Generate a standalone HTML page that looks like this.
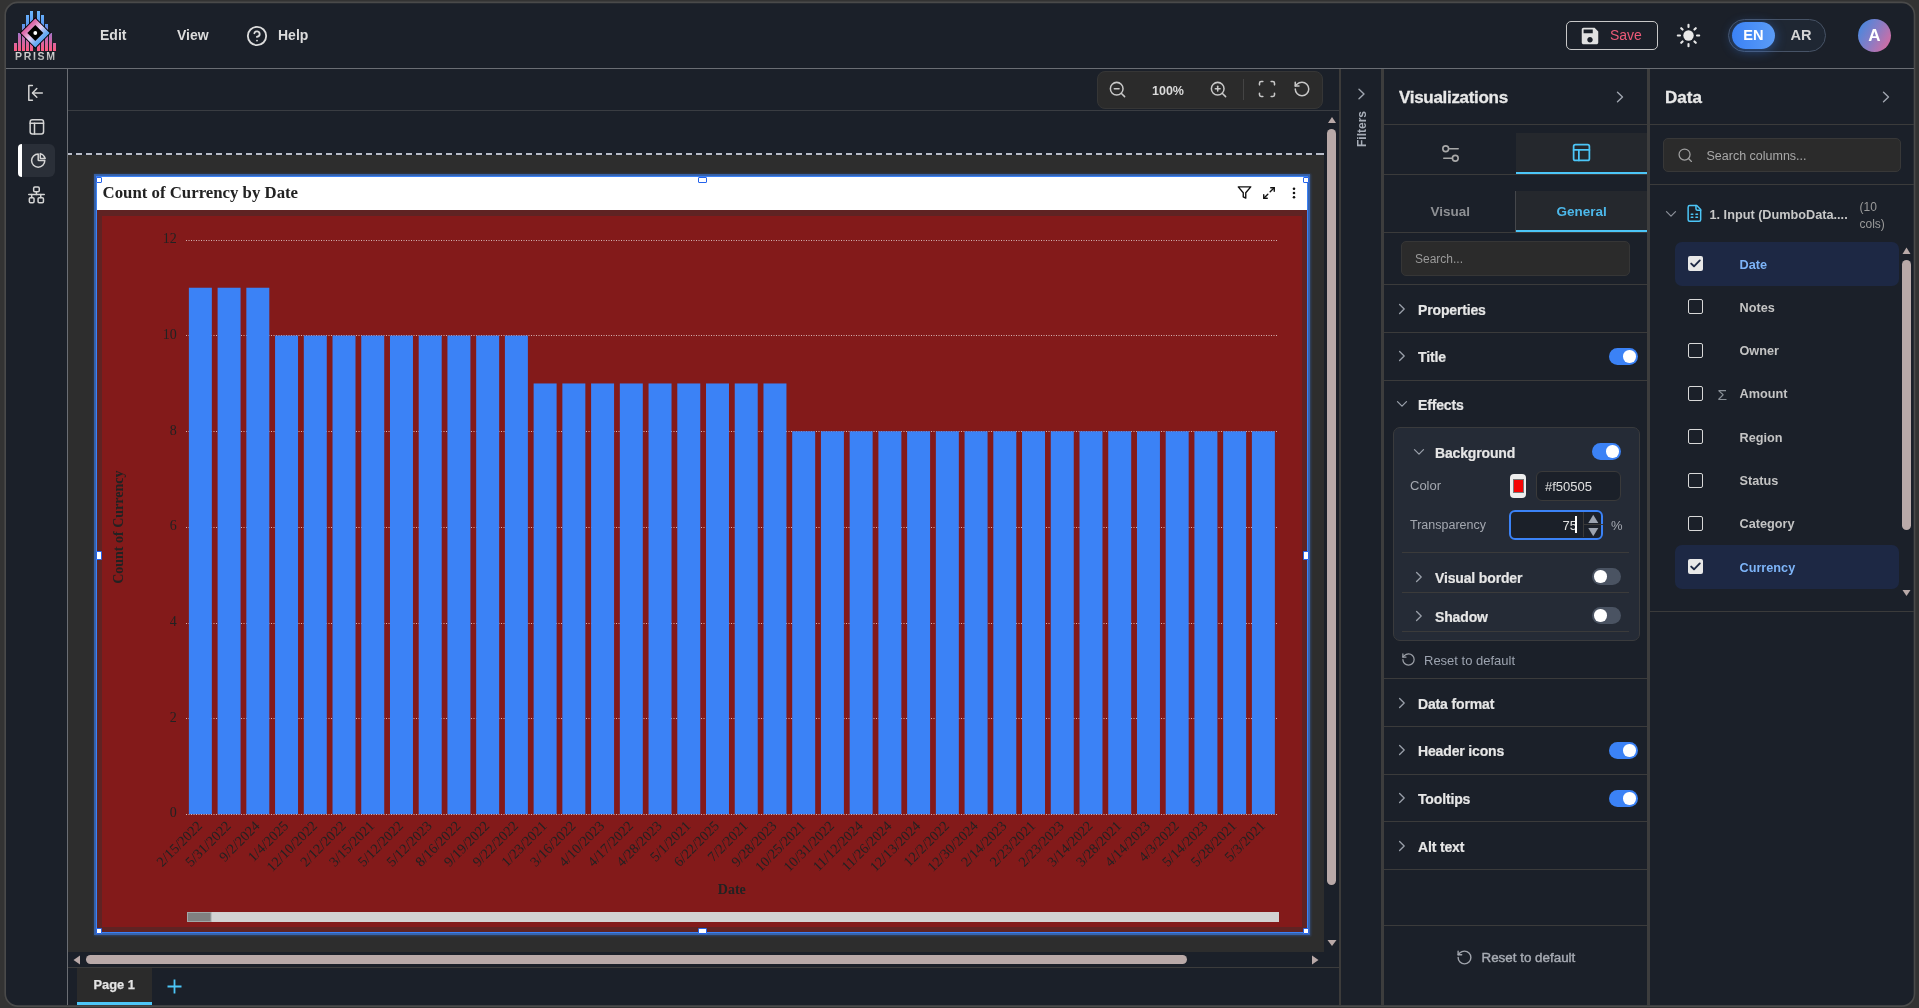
<!DOCTYPE html>
<html><head><meta charset="utf-8">
<style>
*{box-sizing:border-box;margin:0;padding:0}
html,body{width:1919px;height:1008px;overflow:hidden;background:#333333;font-family:"Liberation Sans",sans-serif}
.a{position:absolute}
#frame{position:absolute;left:4px;top:1px;width:1912px;height:1005px;border:2px solid #555555;border-radius:12px;background:#1b2029;overflow:hidden}
.hl{position:absolute;height:1px;background:#3c3c3c}
.vl{position:absolute;width:1px;background:#3c3c3c}
.t{position:absolute;white-space:nowrap;line-height:1}
</style></head><body>
<svg class="a" id="framesvg" style="left:0;top:0" width="1919" height="1008" viewBox="0 0 1919 1008"><rect x="5.2" y="2.4" width="1909.3" height="1003.7" rx="12.5" fill="#1b2029" stroke="#4a4a4a" stroke-width="1.6"/></svg>
<div id="app" class="a" style="left:0;top:0;width:1919px;height:1008px;will-change:transform">

<!-- LOGO -->
<svg class="a" style="left:10px;top:8px" width="50" height="56" viewBox="10 8 50 56">
<defs>
<linearGradient id="barg" x1="0" y1="11" x2="0" y2="51" gradientUnits="userSpaceOnUse">
<stop offset="0" stop-color="#6cb8ff"/><stop offset="0.35" stop-color="#5a98f0"/><stop offset="0.6" stop-color="#b070c0"/><stop offset="1" stop-color="#ff5a80"/></linearGradient>
<linearGradient id="ringg" x1="22" y1="20" x2="48" y2="46" gradientUnits="userSpaceOnUse">
<stop offset="0" stop-color="#d85898"/><stop offset="0.28" stop-color="#de6cac"/><stop offset="0.5" stop-color="#e6d2f2"/><stop offset="0.7" stop-color="#70aef4"/><stop offset="1" stop-color="#2690ec"/></linearGradient>
<linearGradient id="txtg" x1="0" y1="52" x2="0" y2="60" gradientUnits="userSpaceOnUse">
<stop offset="0" stop-color="#d8d8d8"/><stop offset="1" stop-color="#a8a8a8"/></linearGradient>
</defs>
<g fill="url(#barg)">
<rect x="14" y="43" width="3" height="8"/><rect x="18" y="33" width="3" height="18"/><rect x="22" y="24" width="3" height="27"/><rect x="26" y="15" width="3" height="36"/><rect x="30" y="11" width="3" height="40"/>
<rect x="37" y="11" width="3" height="40"/><rect x="41" y="15" width="3" height="36"/><rect x="45" y="24" width="3" height="27"/><rect x="49" y="33" width="3" height="18"/><rect x="53" y="43" width="3" height="8"/>
</g>
<path d="M35.3 17.3 L51 33 L35.3 48.7 L19.6 33 Z" fill="#000"/>
<path d="M35.3 18.6 L49.7 33 L35.3 47.4 L20.9 33 Z" fill="url(#ringg)"/>
<path d="M35.3 25 L43.3 33 L35.3 41 L27.3 33 Z" fill="#000"/>
<circle cx="35.3" cy="33" r="1.9" fill="#fff"/>
<text x="15" y="60" font-family="Liberation Sans" font-weight="bold" font-size="10.5" fill="url(#txtg)" textLength="40" lengthAdjust="spacing">PRISM</text>
</svg>
<!-- menu -->
<div class="t" style="left:100px;top:28px;font-size:14px;font-weight:bold;color:#dcdcdc">Edit</div>
<div class="t" style="left:177px;top:28px;font-size:14px;font-weight:bold;color:#dcdcdc">View</div>
<svg class="a" style="left:246px;top:25px" width="22" height="22" viewBox="0 0 24 24" fill="none" stroke="#dcdcdc" stroke-width="2" stroke-linecap="round" stroke-linejoin="round"><circle cx="12" cy="12" r="10"/><path d="M9.09 9a3 3 0 0 1 5.83 1c0 2-3 3-3 3"/><path d="M12 17h.01"/></svg>
<div class="t" style="left:278px;top:28px;font-size:14px;font-weight:bold;color:#dcdcdc">Help</div>
<!-- save -->
<div class="a" style="left:1566px;top:21px;width:92px;height:29px;border:1px solid #c8c8c8;border-radius:5px"></div>
<svg class="a" style="left:1578.8px;top:25px" width="22" height="22" viewBox="0 0 24 24"><path fill="#e0e0e0" d="M17 3H5c-1.11 0-2 .9-2 2v14c0 1.1.89 2 2 2h14c1.1 0 2-.9 2-2V7l-4-4zm-5 16c-1.66 0-3-1.34-3-3s1.34-3 3-3 3 1.34 3 3-1.34 3-3 3zm3-10H5V5h10v4z"/></svg>
<div class="t" style="left:1610px;top:28px;font-size:14px;color:#ec5a78">Save</div>
<!-- sun -->
<svg class="a" style="left:1676px;top:23px" width="25" height="25" viewBox="0 0 25 25" fill="#e8e8e8" stroke="#e8e8e8" stroke-linecap="round" stroke-width="2.1">
<circle cx="12.5" cy="12.5" r="5.2" stroke="none"/>
<path d="M12.5 1.8v2.2M12.5 21v2.2M1.8 12.5h2.2M21 12.5h2.2M5.2 5.2l1.4 1.4M18.4 18.4l1.4 1.4M5.2 19.8l1.4-1.4M18.4 6.6l1.4-1.4"/></svg>
<!-- lang -->
<div class="a" style="left:1728px;top:19px;width:98px;height:33px;border:1px solid #475366;border-radius:17px;background:#1f2733"></div>
<div class="a" style="left:1732px;top:22px;width:43px;height:27px;border-radius:14px;background:linear-gradient(90deg,#3b82f6,#5b9cf6);box-shadow:0 2px 12px rgba(59,130,246,0.45)"></div>
<div class="t" style="left:1732px;top:28px;width:43px;text-align:center;font-size:14.6px;font-weight:bold;color:#fff">EN</div>
<div class="t" style="left:1779.5px;top:28px;width:43px;text-align:center;font-size:14.6px;font-weight:bold;color:#d4d4d4">AR</div>
<!-- avatar -->
<div class="a" style="left:1858px;top:19px;width:33px;height:33px;border-radius:50%;background:linear-gradient(120deg,#3a8ae4 0%,#8a7cc4 50%,#e6689a 100%)"></div>
<div class="t" style="left:1858px;top:27px;width:33px;text-align:center;font-size:17px;font-weight:bold;color:#fff">A</div>
<!-- SIDEBAR -->
<svg class="a" style="left:0;top:60px" width="68" height="160" viewBox="0 60 68 160" fill="none" stroke="#d4d4d4" stroke-width="1.5" stroke-linecap="round" stroke-linejoin="round">
<path d="M32.4 85.6 H28.8 V100.2 H32.4"/><path d="M42.3 92.9 H32.6"/><path d="M36.8 88.5 L32.5 92.9 L36.8 97.3"/>
<rect x="30.15" y="119.75" width="13.4" height="14.3" rx="2.2"/><path d="M30.15 123.3 H43.55"/><path d="M34.5 123.3 V134"/>
</svg>
<div class="a" style="left:18px;top:144px;width:37px;height:33px;border-radius:6px;background:#2a2f38"></div>
<div class="a" style="left:18px;top:144px;width:4px;height:33px;border-radius:4px 0 0 4px;background:#ffffff"></div>
<svg class="a" style="left:0;top:140px" width="68" height="70" viewBox="0 140 68 70" fill="none" stroke="#d4d4d4" stroke-width="1.5" stroke-linecap="round" stroke-linejoin="round">
<path d="M38.2 154 A6.6 6.6 0 1 0 44.8 160.6 H38.9 Q38.2 160.6 38.2 159.9 Z"/><path d="M40.3 153.6 A7.3 7.3 0 0 1 45.19 158.5 H40.9 Q40.3 158.5 40.3 157.9 Z"/>
<rect x="33.65" y="186.95" width="5.6" height="4.8" rx="1.2"/><path d="M36.45 191.75 V194.4"/><path d="M28.75 194.4 H44.25"/><path d="M31.7 194.4 V197.6"/><path d="M40.75 194.4 V197.6"/>
<rect x="29.35" y="197.65" width="4.7" height="5" rx="1.2"/><rect x="38.05" y="197.65" width="5.4" height="5" rx="1.2"/>
</svg>
<!-- CANVAS -->
<div class="a" style="left:68px;top:110px;width:1271px;height:1px;background:#3a3d42"></div>
<!-- zoom toolbar -->
<div class="a" style="left:1097px;top:71px;width:226px;height:38px;background:#2b2b2b;border:1px solid #363636;border-radius:8px"></div>
<svg class="a" style="left:1108px;top:80px" width="19" height="19" viewBox="0 0 24 24" fill="none" stroke="#c8c8c8" stroke-width="1.9" stroke-linecap="round" stroke-linejoin="round"><circle cx="11" cy="11" r="8"/><path d="m21 21-4.3-4.3"/><path d="M8 11h6"/></svg>
<div class="t" style="left:1152px;top:85px;font-size:12.5px;font-weight:bold;color:#dadada">100%</div>
<svg class="a" style="left:1209px;top:80px" width="19" height="19" viewBox="0 0 24 24" fill="none" stroke="#c8c8c8" stroke-width="1.9" stroke-linecap="round" stroke-linejoin="round"><circle cx="11" cy="11" r="8"/><path d="m21 21-4.3-4.3"/><path d="M11 8v6"/><path d="M8 11h6"/></svg>
<div class="a" style="left:1243px;top:79px;width:1px;height:21px;background:#444"></div>
<svg class="a" style="left:1257px;top:79px" width="20" height="20" viewBox="0 0 24 24" fill="none" stroke="#c8c8c8" stroke-width="1.9" stroke-linecap="round" stroke-linejoin="round"><path d="M3 7V5a2 2 0 0 1 2-2h2"/><path d="M17 3h2a2 2 0 0 1 2 2v2"/><path d="M21 17v2a2 2 0 0 1-2 2h-2"/><path d="M7 21H5a2 2 0 0 1-2-2v-2"/></svg>
<svg class="a" style="left:1293px;top:80px" width="18" height="18" viewBox="0 0 24 24" fill="none" stroke="#c8c8c8" stroke-width="2" stroke-linecap="round" stroke-linejoin="round"><path d="M3 12a9 9 0 1 0 9-9 9.75 9.75 0 0 0-6.74 2.74L3 8"/><path d="M3 3v5h5"/></svg>
<!-- page gray -->
<div class="a" style="left:68px;top:155px;width:1256px;height:797px;background:#2d2d2d"></div>
<div class="a" style="left:68px;top:153px;width:1256px;height:2px;background:repeating-linear-gradient(90deg,#b8bcc8 0 6px,transparent 6px 10px);background-position:-2px 0"></div>
<!-- chart container -->
<div class="a" style="left:96px;top:176px;width:1212px;height:757px;border:1px solid #3b82f6;box-shadow:0 0 0 2px rgba(59,130,246,0.5),0 0 2px 2.5px rgba(59,130,246,0.3)"></div>
<div class="a" style="left:97px;top:177px;width:1210px;height:33px;background:#ffffff"></div>
<div class="a" style="left:97px;top:210px;width:1210px;height:722px;background:#5f2323"></div>
<div class="a" style="left:102px;top:216px;width:1200px;height:711px;background:#831a1a"></div>
<div class="t" style="left:102.6px;top:184.5px;font-family:'Liberation Serif',serif;font-weight:bold;font-size:16.8px;color:#222">Count of Currency by Date</div>
<svg class="a" style="left:1237px;top:185px" width="15" height="15" viewBox="0 0 24 24" fill="none" stroke="#111" stroke-width="2.2" stroke-linecap="round" stroke-linejoin="round"><path d="M22 3H2l8 9.46V19l4 2v-8.54L22 3z"/></svg>
<svg class="a" style="left:1262px;top:186px" width="14" height="14" viewBox="0 0 24 24" fill="none" stroke="#111" stroke-width="2.4" stroke-linecap="round" stroke-linejoin="round"><path d="M15 3h6v6"/><path d="M9 21H3v-6"/><path d="M21 3l-7 7"/><path d="M3 21l7-7"/></svg>
<svg class="a" style="left:1287px;top:186px" width="14" height="14" viewBox="0 0 24 24" fill="#111"><circle cx="12" cy="4.8" r="2.2"/><circle cx="12" cy="12" r="2.2"/><circle cx="12" cy="19.2" r="2.2"/></svg>
<!--CHART--><svg class="a" style="left:0;top:0" width="1919" height="1008" viewBox="0 0 1919 1008">
<line x1="186.0" y1="718.5" x2="1277.7" y2="718.5" stroke="#f0e8e8" stroke-opacity="0.75" stroke-width="1" stroke-dasharray="1 1.5"/>
<line x1="186.0" y1="623.5" x2="1277.7" y2="623.5" stroke="#f0e8e8" stroke-opacity="0.75" stroke-width="1" stroke-dasharray="1 1.5"/>
<line x1="186.0" y1="527.5" x2="1277.7" y2="527.5" stroke="#f0e8e8" stroke-opacity="0.75" stroke-width="1" stroke-dasharray="1 1.5"/>
<line x1="186.0" y1="431.5" x2="1277.7" y2="431.5" stroke="#f0e8e8" stroke-opacity="0.75" stroke-width="1" stroke-dasharray="1 1.5"/>
<line x1="186.0" y1="335.5" x2="1277.7" y2="335.5" stroke="#f0e8e8" stroke-opacity="0.75" stroke-width="1" stroke-dasharray="1 1.5"/>
<line x1="186.0" y1="240.5" x2="1277.7" y2="240.5" stroke="#f0e8e8" stroke-opacity="0.75" stroke-width="1" stroke-dasharray="1 1.5"/>
<rect x="188.87" y="287.74" width="22.98" height="526.46" fill="#3b82f6"/>
<rect x="217.60" y="287.74" width="22.98" height="526.46" fill="#3b82f6"/>
<rect x="246.33" y="287.74" width="22.98" height="526.46" fill="#3b82f6"/>
<rect x="275.06" y="335.60" width="22.98" height="478.60" fill="#3b82f6"/>
<rect x="303.79" y="335.60" width="22.98" height="478.60" fill="#3b82f6"/>
<rect x="332.52" y="335.60" width="22.98" height="478.60" fill="#3b82f6"/>
<rect x="361.25" y="335.60" width="22.98" height="478.60" fill="#3b82f6"/>
<rect x="389.98" y="335.60" width="22.98" height="478.60" fill="#3b82f6"/>
<rect x="418.71" y="335.60" width="22.98" height="478.60" fill="#3b82f6"/>
<rect x="447.44" y="335.60" width="22.98" height="478.60" fill="#3b82f6"/>
<rect x="476.17" y="335.60" width="22.98" height="478.60" fill="#3b82f6"/>
<rect x="504.90" y="335.60" width="22.98" height="478.60" fill="#3b82f6"/>
<rect x="533.63" y="383.46" width="22.98" height="430.74" fill="#3b82f6"/>
<rect x="562.36" y="383.46" width="22.98" height="430.74" fill="#3b82f6"/>
<rect x="591.09" y="383.46" width="22.98" height="430.74" fill="#3b82f6"/>
<rect x="619.82" y="383.46" width="22.98" height="430.74" fill="#3b82f6"/>
<rect x="648.55" y="383.46" width="22.98" height="430.74" fill="#3b82f6"/>
<rect x="677.28" y="383.46" width="22.98" height="430.74" fill="#3b82f6"/>
<rect x="706.01" y="383.46" width="22.98" height="430.74" fill="#3b82f6"/>
<rect x="734.74" y="383.46" width="22.98" height="430.74" fill="#3b82f6"/>
<rect x="763.47" y="383.46" width="22.98" height="430.74" fill="#3b82f6"/>
<rect x="792.20" y="431.32" width="22.98" height="382.88" fill="#3b82f6"/>
<rect x="820.93" y="431.32" width="22.98" height="382.88" fill="#3b82f6"/>
<rect x="849.66" y="431.32" width="22.98" height="382.88" fill="#3b82f6"/>
<rect x="878.39" y="431.32" width="22.98" height="382.88" fill="#3b82f6"/>
<rect x="907.12" y="431.32" width="22.98" height="382.88" fill="#3b82f6"/>
<rect x="935.85" y="431.32" width="22.98" height="382.88" fill="#3b82f6"/>
<rect x="964.58" y="431.32" width="22.98" height="382.88" fill="#3b82f6"/>
<rect x="993.31" y="431.32" width="22.98" height="382.88" fill="#3b82f6"/>
<rect x="1022.04" y="431.32" width="22.98" height="382.88" fill="#3b82f6"/>
<rect x="1050.77" y="431.32" width="22.98" height="382.88" fill="#3b82f6"/>
<rect x="1079.50" y="431.32" width="22.98" height="382.88" fill="#3b82f6"/>
<rect x="1108.23" y="431.32" width="22.98" height="382.88" fill="#3b82f6"/>
<rect x="1136.96" y="431.32" width="22.98" height="382.88" fill="#3b82f6"/>
<rect x="1165.69" y="431.32" width="22.98" height="382.88" fill="#3b82f6"/>
<rect x="1194.42" y="431.32" width="22.98" height="382.88" fill="#3b82f6"/>
<rect x="1223.15" y="431.32" width="22.98" height="382.88" fill="#3b82f6"/>
<rect x="1251.88" y="431.32" width="22.98" height="382.88" fill="#3b82f6"/>
<line x1="186.0" y1="814.5" x2="1277.7" y2="814.5" stroke="#f0e8e8" stroke-opacity="0.75" stroke-width="1" stroke-dasharray="1 1.5"/>
<g font-family="Liberation Serif" font-size="14" fill="#222" text-anchor="end" dominant-baseline="central">
<text x="176.8" y="812.9">0</text>
<text x="176.8" y="717.2">2</text>
<text x="176.8" y="621.5">4</text>
<text x="176.8" y="525.7">6</text>
<text x="176.8" y="430.0">8</text>
<text x="176.8" y="334.3">10</text>
<text x="176.8" y="238.6">12</text>
</g>
<g font-family="Liberation Serif" font-size="14.2" fill="#222" text-anchor="end" dominant-baseline="central">
<text transform="translate(199.47,823.2) rotate(-45)">2/15/2022</text>
<text transform="translate(228.19,823.2) rotate(-45)">5/31/2022</text>
<text transform="translate(256.93,823.2) rotate(-45)">9/2/2024</text>
<text transform="translate(285.66,823.2) rotate(-45)">1/4/2025</text>
<text transform="translate(314.38,823.2) rotate(-45)">12/10/2022</text>
<text transform="translate(343.12,823.2) rotate(-45)">2/12/2022</text>
<text transform="translate(371.85,823.2) rotate(-45)">3/15/2021</text>
<text transform="translate(400.58,823.2) rotate(-45)">5/12/2022</text>
<text transform="translate(429.31,823.2) rotate(-45)">5/12/2023</text>
<text transform="translate(458.04,823.2) rotate(-45)">8/16/2022</text>
<text transform="translate(486.77,823.2) rotate(-45)">9/19/2022</text>
<text transform="translate(515.50,823.2) rotate(-45)">9/22/2022</text>
<text transform="translate(544.23,823.2) rotate(-45)">1/23/2021</text>
<text transform="translate(572.96,823.2) rotate(-45)">3/16/2022</text>
<text transform="translate(601.69,823.2) rotate(-45)">4/10/2023</text>
<text transform="translate(630.42,823.2) rotate(-45)">4/17/2022</text>
<text transform="translate(659.15,823.2) rotate(-45)">4/28/2023</text>
<text transform="translate(687.88,823.2) rotate(-45)">5/1/2021</text>
<text transform="translate(716.61,823.2) rotate(-45)">6/22/2025</text>
<text transform="translate(745.34,823.2) rotate(-45)">7/2/2021</text>
<text transform="translate(774.07,823.2) rotate(-45)">9/28/2023</text>
<text transform="translate(802.80,823.2) rotate(-45)">10/25/2021</text>
<text transform="translate(831.52,823.2) rotate(-45)">10/31/2022</text>
<text transform="translate(860.25,823.2) rotate(-45)">11/12/2024</text>
<text transform="translate(888.99,823.2) rotate(-45)">11/26/2024</text>
<text transform="translate(917.72,823.2) rotate(-45)">12/13/2024</text>
<text transform="translate(946.45,823.2) rotate(-45)">12/2/2022</text>
<text transform="translate(975.18,823.2) rotate(-45)">12/30/2024</text>
<text transform="translate(1003.91,823.2) rotate(-45)">2/14/2023</text>
<text transform="translate(1032.63,823.2) rotate(-45)">2/23/2021</text>
<text transform="translate(1061.36,823.2) rotate(-45)">2/23/2023</text>
<text transform="translate(1090.09,823.2) rotate(-45)">3/14/2022</text>
<text transform="translate(1118.82,823.2) rotate(-45)">3/28/2021</text>
<text transform="translate(1147.55,823.2) rotate(-45)">4/14/2023</text>
<text transform="translate(1176.28,823.2) rotate(-45)">4/3/2022</text>
<text transform="translate(1205.01,823.2) rotate(-45)">5/14/2023</text>
<text transform="translate(1233.74,823.2) rotate(-45)">5/28/2021</text>
<text transform="translate(1262.47,823.2) rotate(-45)">5/3/2021</text>
</g>
<text x="119" y="527.2" transform="rotate(-90 119 527.2)" font-family="Liberation Serif" font-weight="bold" font-size="14" fill="#222" text-anchor="middle" dominant-baseline="central">Count of Currency</text>
<text x="731.85" y="889" font-family="Liberation Serif" font-weight="bold" font-size="14" fill="#222" text-anchor="middle" dominant-baseline="central">Date</text>
<rect x="187" y="912" width="1092" height="10" fill="#d2d2d2"/>
<rect x="187.5" y="912.5" width="23.5" height="9" fill="#808080" stroke="#a0a8a8" stroke-width="1"/>
</svg><!--/CHART-->
<!-- handles -->
<div class="a" style="left:96px;top:177px;width:6px;height:6px;background:#fff;border:1px solid #2563eb;border-radius:1px"></div>
<div class="a" style="left:698px;top:177px;width:9px;height:6px;background:#fff;border:1px solid #2563eb;border-radius:1px"></div>
<div class="a" style="left:1303px;top:177px;width:6px;height:6px;background:#fff;border:1px solid #2563eb;border-radius:1px"></div>
<div class="a" style="left:96px;top:551px;width:6px;height:9px;background:#fff;border:1px solid #2563eb;border-radius:1px"></div>
<div class="a" style="left:1303px;top:551px;width:6px;height:9px;background:#fff;border:1px solid #2563eb;border-radius:1px"></div>
<div class="a" style="left:96px;top:928px;width:6px;height:6px;background:#fff;border:1px solid #2563eb;border-radius:1px"></div>
<div class="a" style="left:698px;top:928px;width:9px;height:6px;background:#fff;border:1px solid #2563eb;border-radius:1px"></div>
<div class="a" style="left:1303px;top:928px;width:6px;height:6px;background:#fff;border:1px solid #2563eb;border-radius:1px"></div>
<!-- vertical scrollbar -->
<svg class="a" style="left:1324px;top:111px" width="16" height="841" viewBox="0 0 16 841"><path d="M8 6 L12 12 L4 12 Z" fill="#b9a9a8"/><rect x="3" y="18" width="9" height="756" rx="4.5" fill="#b9a9a8"/><path d="M3.5 829 L12.5 829 L8 835 Z" fill="#b9a9a8"/></svg>
<!-- horizontal scrollbar -->
<svg class="a" style="left:68px;top:952px" width="1271" height="15" viewBox="0 0 1271 15"><path d="M5.5 8 L12 3.5 L12 12.5 Z" fill="#b9a9a8"/><rect x="18" y="3" width="1101" height="9" rx="4.5" fill="#b9a9a8"/><path d="M1244 3.5 L1250.5 8 L1244 12.5 Z" fill="#b9a9a8"/></svg>
<div class="a" style="left:68px;top:967px;width:1271px;height:1px;background:#3c3c3c"></div>
<!-- page tabs -->
<div class="a" style="left:77px;top:968px;width:75px;height:37px;background:#2b2b2b"></div>
<div class="a" style="left:77px;top:1002px;width:75px;height:3px;background:#4cc6f8"></div>
<div class="t" style="left:93.5px;top:978.6px;font-size:12.8px;font-weight:bold;color:#e4e4e4;-webkit-text-stroke:0.25px #e4e4e4">Page 1</div>
<svg class="a" style="left:166px;top:978px" width="17" height="17" viewBox="0 0 17 17" stroke="#4cc6f8" stroke-width="1.8"><path d="M8.5 1.5v14M1.5 8.5h14"/></svg>
<!-- FILTERS -->
<svg class="a" style="left:1357px;top:88px" width="9" height="12" viewBox="0 0 9 12" fill="none" stroke="#a0a6b0" stroke-width="1.4" stroke-linecap="round" stroke-linejoin="round"><path d="M2 1.3 L7 6 L2 10.7"/></svg>
<div class="t" style="left:1342px;top:122.5px;width:40px;text-align:center;font-size:12px;font-weight:bold;color:#a8aeb8;transform:rotate(-90deg);transform-origin:20px 6px">Filters</div>

<!-- VIZ PANEL -->
<div class="t" style="left:1399px;top:88.9px;font-size:17px;font-weight:bold;color:#e8e8e8;-webkit-text-stroke:0.3px #e8e8e8;letter-spacing:-0.3px">Visualizations</div>
<svg class="a" style="left:1615px;top:91px" width="10" height="12" viewBox="0 0 10 12" fill="none" stroke="#a0a6b0" stroke-width="1.4" stroke-linecap="round" stroke-linejoin="round"><path d="M2.5 1.3 L7.5 6 L2.5 10.7"/></svg>
<div class="a" style="left:1384px;top:124px;width:263px;height:1px;background:#3b3b3b"></div>
<div class="a" style="left:1516px;top:133px;width:131px;height:41px;background:#25282d"></div>
<svg class="a" style="left:1439px;top:141.5px" width="23" height="23" viewBox="0 0 24 24" fill="none" stroke="#a8a8a8" stroke-width="1.7" stroke-linecap="round" stroke-linejoin="round"><path d="M20 7h-9"/><path d="M14 17H5"/><circle cx="17" cy="17" r="3"/><circle cx="7" cy="7" r="3"/></svg>
<svg class="a" style="left:1571px;top:142px" width="21" height="21" viewBox="0 0 24 24" fill="none" stroke="#4cc6f8" stroke-width="2" stroke-linecap="round" stroke-linejoin="round"><rect x="3" y="3" width="18" height="18" rx="2"/><path d="M3 9h18"/><path d="M9 21V9"/></svg>
<div class="a" style="left:1384px;top:174px;width:263px;height:1px;background:#3b3b3b"></div>
<div class="a" style="left:1516px;top:172px;width:131px;height:2px;background:#4cc6f8"></div>
<div class="a" style="left:1516px;top:191px;width:131px;height:41px;background:#25282d"></div>
<div class="a" style="left:1515px;top:191px;width:1px;height:41px;background:#45474b"></div>
<div class="t" style="left:1430.5px;top:205.4px;font-size:13.5px;font-weight:bold;color:#8e9094;">Visual</div>
<div class="t" style="left:1556.5px;top:205.4px;font-size:13.5px;font-weight:bold;color:#4cb8ea;">General</div>
<div class="a" style="left:1384px;top:232px;width:263px;height:1px;background:#3b3b3b"></div>
<div class="a" style="left:1516px;top:230px;width:131px;height:2px;background:#4cc6f8"></div>
<div class="a" style="left:1401px;top:241px;width:229px;height:35px;background:#2b2b2b;border:1px solid #363636;border-radius:5px"></div>
<div class="t" style="left:1415px;top:253.1px;font-size:12px;font-weight:normal;color:#9a9a9a;">Search...</div>
<div class="a" style="left:1384px;top:284px;width:263px;height:1px;background:#3b3b3b"></div>
<svg class="a" style="left:1398px;top:303px" width="9" height="12" viewBox="0 0 9 12" fill="none" stroke="#9aa0aa" stroke-width="1.3" stroke-linecap="round" stroke-linejoin="round"><path d="M1.6 1.5 L6.2 6 L1.6 10.5"/></svg>
<div class="t" style="left:1418px;top:302.8px;font-size:14px;font-weight:bold;color:#e6e6e6;-webkit-text-stroke:0.2px #e6e6e6;letter-spacing:-0.15px">Properties</div>
<div class="a" style="left:1384px;top:332px;width:263px;height:1px;background:#3b3b3b"></div>
<svg class="a" style="left:1398px;top:350px" width="9" height="12" viewBox="0 0 9 12" fill="none" stroke="#9aa0aa" stroke-width="1.3" stroke-linecap="round" stroke-linejoin="round"><path d="M1.6 1.5 L6.2 6 L1.6 10.5"/></svg>
<div class="t" style="left:1418px;top:349.8px;font-size:14px;font-weight:bold;color:#e6e6e6;-webkit-text-stroke:0.2px #e6e6e6;letter-spacing:-0.15px">Title</div>
<div class="a" style="left:1609px;top:348px;width:29px;height:17px;border-radius:9px;background:#3b82f6"></div><div class="a" style="left:1623px;top:350.3px;width:12.5px;height:12.5px;border-radius:50%;background:#fff"></div>
<div class="a" style="left:1384px;top:380px;width:263px;height:1px;background:#3b3b3b"></div>
<svg class="a" style="left:1396px;top:399.5px" width="12" height="9" viewBox="0 0 12 9" fill="none" stroke="#9aa0aa" stroke-width="1.3" stroke-linecap="round" stroke-linejoin="round"><path d="M1.5 1.6 L6 6.1 L10.5 1.6"/></svg>
<div class="t" style="left:1418px;top:397.8px;font-size:14px;font-weight:bold;color:#e6e6e6;-webkit-text-stroke:0.2px #e6e6e6;letter-spacing:-0.15px">Effects</div>
<div class="a" style="left:1393px;top:427px;width:247px;height:214px;background:#252b36;border:1px solid #3a3b3d;border-radius:7px"></div>
<svg class="a" style="left:1413px;top:447.5px" width="12" height="9" viewBox="0 0 12 9" fill="none" stroke="#9aa0aa" stroke-width="1.3" stroke-linecap="round" stroke-linejoin="round"><path d="M1.5 1.6 L6 6.1 L10.5 1.6"/></svg>
<div class="t" style="left:1435px;top:445.8px;font-size:14px;font-weight:bold;color:#e6e6e6;-webkit-text-stroke:0.2px #e6e6e6;letter-spacing:-0.15px">Background</div>
<div class="a" style="left:1592px;top:443px;width:29px;height:17px;border-radius:9px;background:#3b82f6"></div><div class="a" style="left:1606px;top:445.3px;width:12.5px;height:12.5px;border-radius:50%;background:#fff"></div>
<div class="t" style="left:1410px;top:479.4px;font-size:13px;font-weight:normal;color:#a4a8b0;">Color</div>
<div class="a" style="left:1510px;top:474px;width:16px;height:24px;background:#eeeeee;border-radius:4px"></div>
<div class="a" style="left:1512.5px;top:479px;width:11px;height:13.5px;background:#f50505;border:1px solid #7a7a7a"></div>
<div class="a" style="left:1536px;top:471px;width:85px;height:30px;background:#1b2029;border:1px solid #3a3a3a;border-radius:6px"></div>
<div class="t" style="left:1545px;top:480.1px;font-size:13px;font-weight:normal;color:#e0e0e0;">#f50505</div>
<div class="t" style="left:1410px;top:519.4px;font-size:12.5px;font-weight:normal;color:#a4a8b0;">Transparency</div>
<div class="a" style="left:1509px;top:510px;width:94px;height:30px;background:#1b2029;border:2px solid #3b82f6;border-radius:6px"></div>
<div class="t" style="left:1562.5px;top:519.1px;font-size:13px;font-weight:normal;color:#e0e0e0;">75</div>
<div class="a" style="left:1575px;top:516px;width:1.5px;height:17px;background:#ffffff"></div>
<div class="a" style="left:1583px;top:512px;width:1px;height:25px;background:#3a3a3a"></div>
<div class="a" style="left:1583px;top:524px;width:20px;height:1px;background:#3a3a3a"></div>
<svg class="a" style="left:1588px;top:514px" width="11" height="23" viewBox="0 0 11 23" fill="#9ca3af"><path d="M5.25 0.8 L10.3 9 L0.3 9 Z"/><path d="M0.3 14 L10.3 14 L5.25 22.2 Z"/></svg>
<div class="t" style="left:1611px;top:519.1px;font-size:13px;font-weight:normal;color:#a4a8b0;">%</div>
<div class="a" style="left:1402px;top:552px;width:227px;height:1px;background:#3b3b3b"></div>
<svg class="a" style="left:1415px;top:571px" width="9" height="12" viewBox="0 0 9 12" fill="none" stroke="#9aa0aa" stroke-width="1.3" stroke-linecap="round" stroke-linejoin="round"><path d="M1.6 1.5 L6.2 6 L1.6 10.5"/></svg>
<div class="t" style="left:1435px;top:570.8px;font-size:14px;font-weight:bold;color:#e6e6e6;-webkit-text-stroke:0.2px #e6e6e6;letter-spacing:-0.15px">Visual border</div>
<div class="a" style="left:1592px;top:568px;width:29px;height:17px;border-radius:9px;background:#4a5362"></div><div class="a" style="left:1594px;top:570.3px;width:12.5px;height:12.5px;border-radius:50%;background:#fff"></div>
<div class="a" style="left:1402px;top:592px;width:227px;height:1px;background:#3b3b3b"></div>
<svg class="a" style="left:1415px;top:610px" width="9" height="12" viewBox="0 0 9 12" fill="none" stroke="#9aa0aa" stroke-width="1.3" stroke-linecap="round" stroke-linejoin="round"><path d="M1.6 1.5 L6.2 6 L1.6 10.5"/></svg>
<div class="t" style="left:1435px;top:609.8px;font-size:14px;font-weight:bold;color:#e6e6e6;-webkit-text-stroke:0.2px #e6e6e6;letter-spacing:-0.15px">Shadow</div>
<div class="a" style="left:1592px;top:607px;width:29px;height:17px;border-radius:9px;background:#4a5362"></div><div class="a" style="left:1594px;top:609.3px;width:12.5px;height:12.5px;border-radius:50%;background:#fff"></div>
<div class="a" style="left:1402px;top:631px;width:227px;height:1px;background:#3b3b3b"></div>
<svg class="a" style="left:1400.5px;top:651.5px" width="15" height="15" viewBox="0 0 24 24" fill="none" stroke="#9ca0a8" stroke-width="2" stroke-linecap="round" stroke-linejoin="round"><path d="M3 12a9 9 0 1 0 9-9 9.75 9.75 0 0 0-6.74 2.74L3 8"/><path d="M3 3v5h5"/></svg>
<div class="t" style="left:1424px;top:653.6px;font-size:13px;font-weight:normal;color:#9ca3af;">Reset to default</div>
<div class="a" style="left:1384px;top:678px;width:263px;height:1px;background:#3b3b3b"></div>
<svg class="a" style="left:1398px;top:697px" width="9" height="12" viewBox="0 0 9 12" fill="none" stroke="#9aa0aa" stroke-width="1.3" stroke-linecap="round" stroke-linejoin="round"><path d="M1.6 1.5 L6.2 6 L1.6 10.5"/></svg>
<div class="t" style="left:1418px;top:696.8px;font-size:14px;font-weight:bold;color:#e6e6e6;-webkit-text-stroke:0.2px #e6e6e6;letter-spacing:-0.15px">Data format</div>
<div class="a" style="left:1384px;top:726px;width:263px;height:1px;background:#3b3b3b"></div>
<svg class="a" style="left:1398px;top:744px" width="9" height="12" viewBox="0 0 9 12" fill="none" stroke="#9aa0aa" stroke-width="1.3" stroke-linecap="round" stroke-linejoin="round"><path d="M1.6 1.5 L6.2 6 L1.6 10.5"/></svg>
<div class="t" style="left:1418px;top:743.8px;font-size:14px;font-weight:bold;color:#e6e6e6;-webkit-text-stroke:0.2px #e6e6e6;letter-spacing:-0.15px">Header icons</div>
<div class="a" style="left:1609px;top:742px;width:29px;height:17px;border-radius:9px;background:#3b82f6"></div><div class="a" style="left:1623px;top:744.3px;width:12.5px;height:12.5px;border-radius:50%;background:#fff"></div>
<div class="a" style="left:1384px;top:774px;width:263px;height:1px;background:#3b3b3b"></div>
<svg class="a" style="left:1398px;top:792px" width="9" height="12" viewBox="0 0 9 12" fill="none" stroke="#9aa0aa" stroke-width="1.3" stroke-linecap="round" stroke-linejoin="round"><path d="M1.6 1.5 L6.2 6 L1.6 10.5"/></svg>
<div class="t" style="left:1418px;top:791.8px;font-size:14px;font-weight:bold;color:#e6e6e6;-webkit-text-stroke:0.2px #e6e6e6;letter-spacing:-0.15px">Tooltips</div>
<div class="a" style="left:1609px;top:790px;width:29px;height:17px;border-radius:9px;background:#3b82f6"></div><div class="a" style="left:1623px;top:792.3px;width:12.5px;height:12.5px;border-radius:50%;background:#fff"></div>
<div class="a" style="left:1384px;top:821px;width:263px;height:1px;background:#3b3b3b"></div>
<svg class="a" style="left:1398px;top:840px" width="9" height="12" viewBox="0 0 9 12" fill="none" stroke="#9aa0aa" stroke-width="1.3" stroke-linecap="round" stroke-linejoin="round"><path d="M1.6 1.5 L6.2 6 L1.6 10.5"/></svg>
<div class="t" style="left:1418px;top:839.8px;font-size:14px;font-weight:bold;color:#e6e6e6;-webkit-text-stroke:0.2px #e6e6e6;letter-spacing:-0.15px">Alt text</div>
<div class="a" style="left:1384px;top:869px;width:263px;height:1px;background:#3b3b3b"></div>
<div class="a" style="left:1384px;top:925px;width:263px;height:1px;background:#3b3b3b"></div>
<svg class="a" style="left:1456px;top:948.5px" width="17" height="17" viewBox="0 0 24 24" fill="none" stroke="#a0a4ac" stroke-width="2" stroke-linecap="round" stroke-linejoin="round"><path d="M3 12a9 9 0 1 0 9-9 9.75 9.75 0 0 0-6.74 2.74L3 8"/><path d="M3 3v5h5"/></svg>
<div class="t" style="left:1481.5px;top:951.0px;font-size:13.4px;font-weight:normal;color:#a8acb4;-webkit-text-stroke:0.4px #a8acb4">Reset to default</div>
<!-- DATA PANEL -->
<div class="t" style="left:1665px;top:88.9px;font-size:17px;font-weight:bold;color:#e8e8e8;-webkit-text-stroke:0.3px #e8e8e8">Data</div>
<svg class="a" style="left:1881px;top:91px" width="10" height="12" viewBox="0 0 10 12" fill="none" stroke="#a0a6b0" stroke-width="1.4" stroke-linecap="round" stroke-linejoin="round"><path d="M2.5 1.3 L7.5 6 L2.5 10.7"/></svg>
<div class="a" style="left:1650px;top:124px;width:264px;height:1px;background:#3b3b3b"></div>
<div class="a" style="left:1663px;top:138px;width:238px;height:34px;background:#2b2b2b;border:1px solid #383838;border-radius:5px"></div>
<svg class="a" style="left:1676.5px;top:146.5px" width="16.5" height="16.5" viewBox="0 0 24 24" fill="none" stroke="#a0a0a0" stroke-width="1.8" stroke-linecap="round" stroke-linejoin="round"><circle cx="11" cy="11" r="8"/><path d="m21 21-4.3-4.3"/></svg>
<div class="t" style="left:1706.5px;top:149.9px;font-size:12.5px;font-weight:normal;color:#a8a8a8;">Search columns...</div>
<div class="a" style="left:1650px;top:184px;width:264px;height:1px;background:#3b3b3b"></div>
<svg class="a" style="left:1665px;top:210.0px" width="12" height="9" viewBox="0 0 12 9" fill="none" stroke="#8a8f98" stroke-width="1.3" stroke-linecap="round" stroke-linejoin="round"><path d="M1.5 1.6 L6 6.1 L10.5 1.6"/></svg>
<svg class="a" style="left:1685px;top:204px" width="18.8" height="18.8" viewBox="0 0 24 24" fill="none" stroke="#4cc6f8" stroke-width="1.9" stroke-linecap="round" stroke-linejoin="round"><path d="M15 2H6a2 2 0 0 0-2 2v16a2 2 0 0 0 2 2h12a2 2 0 0 0 2-2V7Z"/><path d="M14 2v4a2 2 0 0 0 2 2h4"/><path d="M8 13h2"/><path d="M14 13h2"/><path d="M8 17h2"/><path d="M14 17h2"/></svg>
<div class="t" style="left:1709.5px;top:209.3px;font-size:12.7px;font-weight:bold;color:#c8c8c8;">1. Input (DumboData....</div>
<div class="t" style="left:1859.5px;top:200.6px;font-size:12px;font-weight:normal;color:#9a9a9a;">(10</div>
<div class="t" style="left:1859.5px;top:218.1px;font-size:12px;font-weight:normal;color:#9a9a9a;">cols)</div>
<div class="a" style="left:1675px;top:241.9px;width:224px;height:43.8px;border-radius:7px;background:#1d2844"></div>
<svg class="a" style="left:1688px;top:256.1px" width="15" height="15" viewBox="0 0 15 15"><rect x="0" y="0" width="15" height="15" rx="2" fill="#e8e8e8"/><path d="M3.2 7.6 L6 10.3 L11.8 4.4" fill="none" stroke="#1d2844" stroke-width="1.9" stroke-linecap="round" stroke-linejoin="round"/></svg>
<div class="t" style="left:1739.5px;top:258.5px;font-size:12.7px;font-weight:bold;color:#7db4f8;">Date</div>
<div class="a" style="left:1688px;top:299.4px;width:15px;height:15px;border:1.6px solid #d8d8d8;border-radius:2px"></div>
<div class="t" style="left:1739.5px;top:301.8px;font-size:12.7px;font-weight:bold;color:#c4c4c4;">Notes</div>
<div class="a" style="left:1688px;top:342.7px;width:15px;height:15px;border:1.6px solid #d8d8d8;border-radius:2px"></div>
<div class="t" style="left:1739.5px;top:345.1px;font-size:12.7px;font-weight:bold;color:#c4c4c4;">Owner</div>
<div class="a" style="left:1688px;top:386.0px;width:15px;height:15px;border:1.6px solid #d8d8d8;border-radius:2px"></div>
<div class="t" style="left:1739.5px;top:388.4px;font-size:12.7px;font-weight:bold;color:#c4c4c4;">Amount</div>
<div class="t" style="left:1717.5px;top:387.1px;font-size:15.5px;font-weight:normal;color:#8a9098;">&#931;</div>
<div class="a" style="left:1688px;top:429.3px;width:15px;height:15px;border:1.6px solid #d8d8d8;border-radius:2px"></div>
<div class="t" style="left:1739.5px;top:431.7px;font-size:12.7px;font-weight:bold;color:#c4c4c4;">Region</div>
<div class="a" style="left:1688px;top:472.6px;width:15px;height:15px;border:1.6px solid #d8d8d8;border-radius:2px"></div>
<div class="t" style="left:1739.5px;top:475.0px;font-size:12.7px;font-weight:bold;color:#c4c4c4;">Status</div>
<div class="a" style="left:1688px;top:515.9px;width:15px;height:15px;border:1.6px solid #d8d8d8;border-radius:2px"></div>
<div class="t" style="left:1739.5px;top:518.3px;font-size:12.7px;font-weight:bold;color:#c4c4c4;">Category</div>
<div class="a" style="left:1675px;top:545.0px;width:224px;height:43.8px;border-radius:7px;background:#1d2844"></div>
<svg class="a" style="left:1688px;top:559.2px" width="15" height="15" viewBox="0 0 15 15"><rect x="0" y="0" width="15" height="15" rx="2" fill="#e8e8e8"/><path d="M3.2 7.6 L6 10.3 L11.8 4.4" fill="none" stroke="#1d2844" stroke-width="1.9" stroke-linecap="round" stroke-linejoin="round"/></svg>
<div class="t" style="left:1739.5px;top:561.6px;font-size:12.7px;font-weight:bold;color:#7db4f8;">Currency</div>
<svg class="a" style="left:1901px;top:246px" width="12" height="352" viewBox="0 0 12 352"><path d="M5.5 1.5 L9.5 8 L1.5 8 Z" fill="#b9a9a8"/><rect x="1" y="14" width="9" height="270" rx="4.5" fill="#b9a9a8"/><path d="M1.5 344 L9.5 344 L5.5 350 Z" fill="#b9a9a8"/></svg>
<div class="a" style="left:1650px;top:611px;width:264px;height:1px;background:#3b3b3b"></div>
<!-- top bar line -->
<div class="a" style="left:6px;top:68px;width:1908px;height:1px;background:#6b6e74"></div>
<!-- sidebar border -->
<div class="a" style="left:67px;top:68px;width:1px;height:937px;background:#6b6e74"></div>
<!-- canvas right border -->
<div class="a" style="left:1339px;top:69px;width:2px;height:936px;background:#3c3b3a"></div>
<!-- filters right border -->
<div class="a" style="left:1381px;top:69px;width:3px;height:936px;background:#3d3d3d"></div>
<!-- viz right border -->
<div class="a" style="left:1647px;top:69px;width:3px;height:936px;background:#3d3d3d"></div>
</div>
</body></html>
